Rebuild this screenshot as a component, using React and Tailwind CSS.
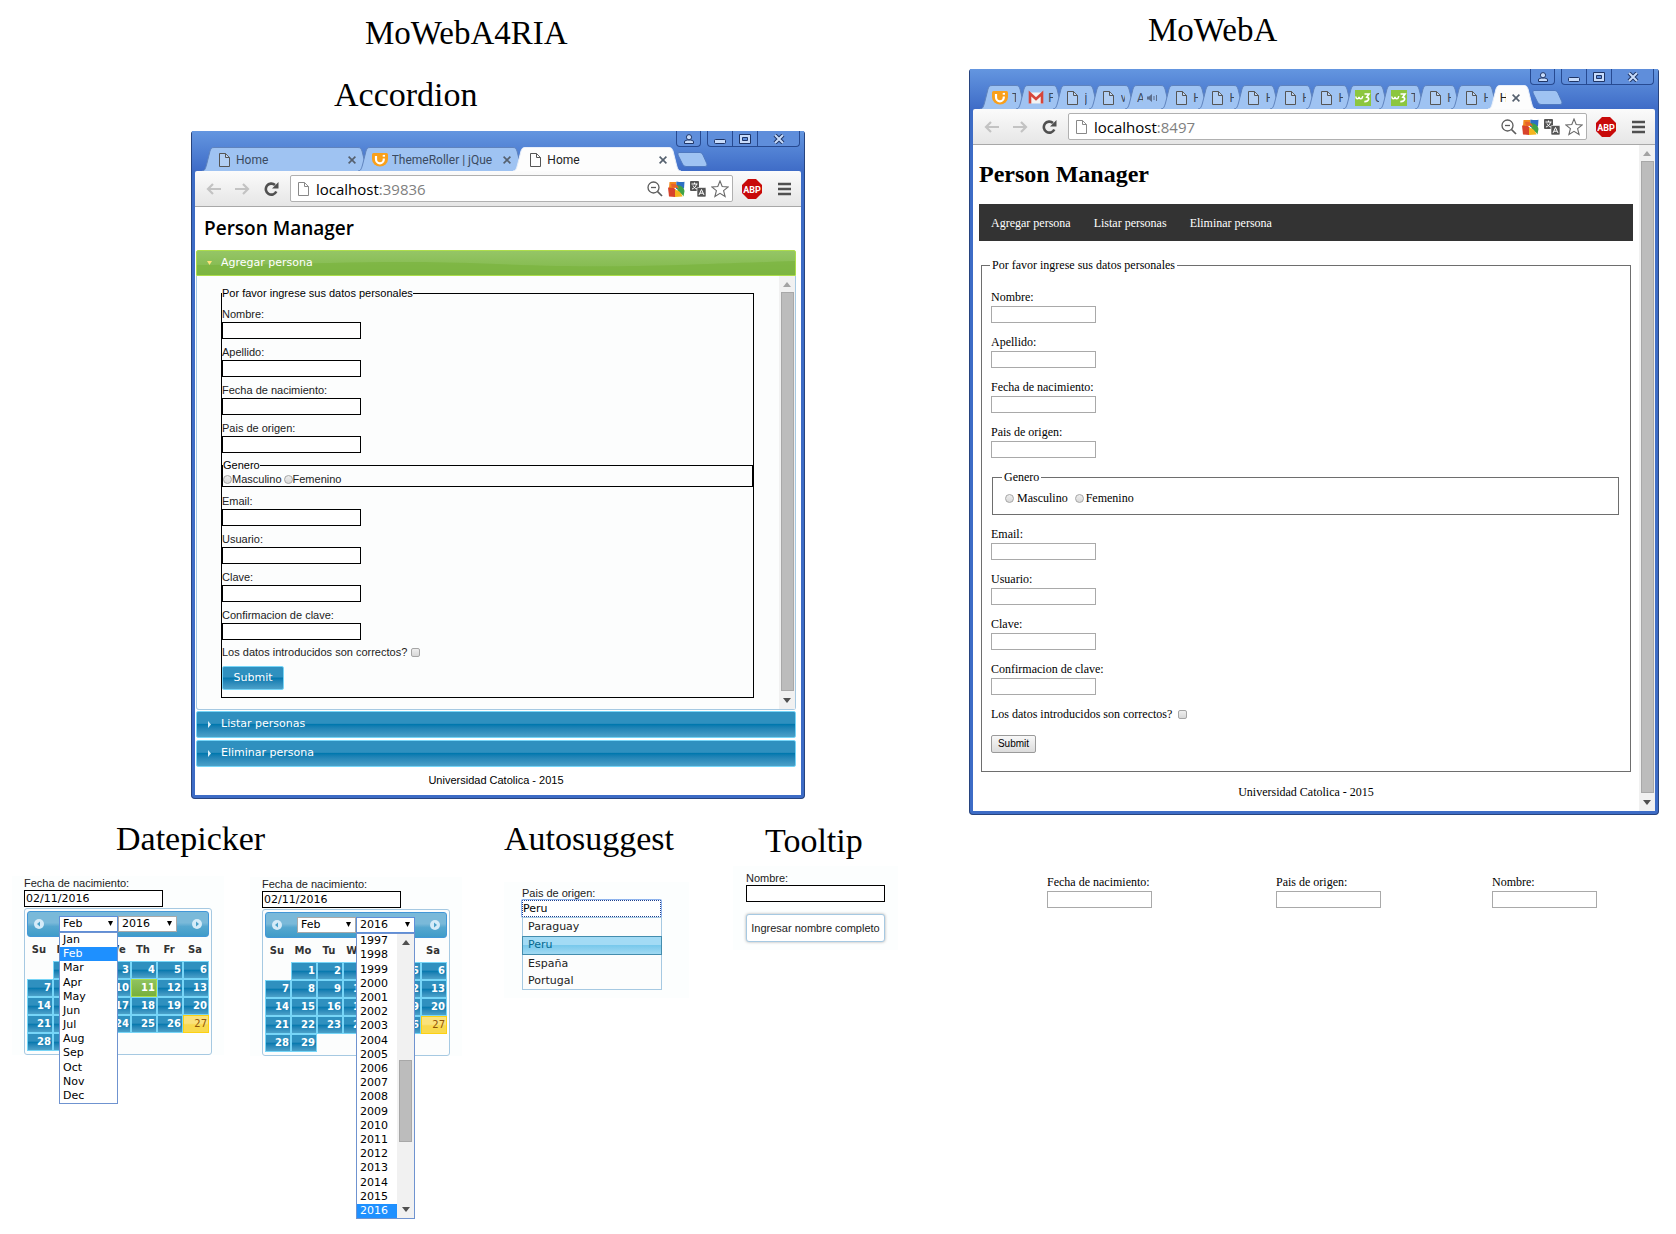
import React from "react";

const SANS = "font-['Liberation_Sans',Arial,sans-serif]";
const SERIF = "font-['Liberation_Serif','Times_New_Roman',serif]";

/* ---------- icons ---------- */

function PageIcon({ color = "#555" }) {
  return (
    <svg className="h-[14px] w-[11px] shrink-0" viewBox="0 0 11 14" fill="#fff" fillOpacity=".2" stroke={color}>
      <path d="M.5 .5h6l4 4v9H.5z" />
      <path d="M6.5 .5v4h4" />
    </svg>
  );
}

function UiIcon() {
  return (
    <svg className="h-4 w-4 shrink-0" viewBox="0 0 16 16">
      <path d="M1.500 1h13q1.500 0 1.500 1.500V7a8 7.500 0 0 1-16 0V2.500Q0 1 1.500 1z" fill="#f9a01b" />
      <path d="M4 4v3.200a3.800 4 0 0 0 7.800 0V6.500" fill="none" stroke="#fff" strokeWidth="2.200" />
      <path d="M10.700 3.800h2.300" stroke="#fff" strokeWidth="1.800" />
    </svg>
  );
}

function MailIcon() {
  return (
    <svg className="h-4 w-4 shrink-0" viewBox="0 0 16 16">
      <path d="M1 2.5h14v11H1z" fill="#f3f3f3" />
      <path d="M2 13.5V3.5l6 5.5 6-5.5v10" fill="none" stroke="#d6453a" strokeWidth="2.6" />
    </svg>
  );
}

function W3Icon() {
  return (
    <svg className="h-4 w-4 shrink-0" viewBox="0 0 16 16">
      <path d="M0 0h16v16H0z" fill="#8cc63f" />
      <path d="M.8 6.5c.3 3 2.8 3 3.2.3.4 2.700 3.200 2.700 3.800-.6" fill="none" stroke="#fff" strokeWidth="1.5" />
      <path d="M9.500 4h4.500l-2.200 3.200c3 .3 2.600 4.600-2.500 4.400" fill="none" stroke="#fff" strokeWidth="1.6" />
    </svg>
  );
}

function SpeakerIcon() {
  return (
    <svg className="h-[10px] w-[11px] shrink-0" viewBox="0 0 11 10">
      <path d="M0 3.500h2L5 1v8L2 6.500H0z" fill="#5d6f8d" />
      <path d="M7 3v4M9.500 2v6" stroke="#5d6f8d" fill="none" />
    </svg>
  );
}

function TabClose() {
  return (
    <svg className="h-2 w-2" viewBox="0 0 8 8" stroke="#55606e" strokeWidth="1.6">
      <path d="M.6 .6l6.800 6.800M7.400 .6L.6 7.400" />
    </svg>
  );
}

const FAVICONS = { page: PageIcon, ui: UiIcon, mail: MailIcon, w3: W3Icon };

/* ---------- browser chrome ---------- */

function Tab({ title, icon, active, closable, speaker, small }) {
  const fill = active ? "#fdfdfd" : "#9fc3f2";
  const line = active ? "#e8effa" : "#5f83bd";
  const Icon = icon ? FAVICONS[icon] : null;
  return (
    <div
      role="tab"
      aria-selected={!!active}
      className={
        "-mr-3 flex h-6 min-w-0 flex-1 " + (active ? "relative z-10" : "")
      }
    >
      <svg className="h-6 w-3 shrink-0" viewBox="0 0 12 24">
        <path d="M0 24C3 24 3.500 21 4.500 18L8 4C9 1.500 9.500 .5 12 .5V24z" fill={fill} />
        <path d="M0 24C3 24 3.500 21 4.500 18L8 4C9 1.500 9.500 .5 12 .5" fill="none" stroke={line} />
      </svg>
      <div
        className={
          "flex h-6 min-w-0 flex-1 items-center gap-1 overflow-hidden border-t text-[12px] font-['Roboto','Noto_Sans',sans-serif] " +
          (active ? "border-[#e8effa] bg-[#fdfdfd] text-[#222]" : "border-[#5f83bd] bg-[#9fc3f2] text-[#3a4a60]") +
          (small ? "" : " px-[2px]")
        }
      >
        {Icon && (
          <span className="flex w-4 shrink-0 justify-center">
            <Icon />
          </span>
        )}
        <span className={small && !Icon ? "w-[6px] shrink-0 overflow-hidden" : "min-w-0 flex-1 overflow-hidden whitespace-nowrap"}>
          {title}
        </span>
        {speaker && <SpeakerIcon />}
        {closable && (
          <button aria-label="Close tab" className="ml-[2px] shrink-0">
            <TabClose />
          </button>
        )}
      </div>
      <svg className="h-6 w-3 shrink-0" viewBox="0 0 12 24">
        <path d="M12 24C9 24 8.500 21 7.500 18L4 4C3 1.500 2.500 .5 0 .5V24z" fill={fill} />
        <path d="M12 24C9 24 8.500 21 7.500 18L4 4C3 1.500 2.500 .5 0 .5" fill="none" stroke={line} />
      </svg>
    </div>
  );
}

function WindowButtons() {
  return (
    <div className="flex h-4 justify-end gap-[6px] pr-px">
      <button aria-label="User" className="flex h-4 w-[25px] items-center justify-center rounded-b border border-t-0 border-[#274a91] bg-[#5f8edb]">
        <svg className="h-[10px] w-[10px]" viewBox="0 0 10 10" fill="#c8dcfb" stroke="#1f3566">
          <path d="M.5 9.500V7.200L3 6h4l2.500 1.200v2.300z" />
          <circle cx="5" cy="3.200" r="2.600" />
        </svg>
      </button>
      <div className="flex h-4 rounded-b border border-t-0 border-[#274a91] bg-[#5f8edb]">
        <button aria-label="Minimize" className="flex w-[25px] items-center justify-center border-r border-[#274a91]">
          <svg className="h-[10px] w-[12px]" viewBox="0 0 12 10" fill="#c8dcfb" stroke="#1f3566">
            <rect x=".5" y="5.500" width="11" height="4" rx="1" />
          </svg>
        </button>
        <button aria-label="Maximize" className="flex w-[25px] items-center justify-center border-r border-[#274a91]">
          <svg className="h-[10px] w-[12px]" viewBox="0 0 12 10" fill="none">
            <path d="M.5 .5h11v9H.5z" fill="#c8dcfb" stroke="#1f3566" />
            <path d="M3.500 3.500h5v3h-5z" fill="#5f8edb" stroke="#1f3566" />
          </svg>
        </button>
        <button aria-label="Close" className="flex w-[41px] items-center justify-center">
          <svg className="h-[10px] w-[12px]" viewBox="0 0 12 10">
            <path d="M2 1l8 8M10 1L2 9" stroke="#1f3566" strokeWidth="4" />
            <path d="M2 1l8 8M10 1L2 9" stroke="#c8dcfb" strokeWidth="2" />
          </svg>
        </button>
      </div>
    </div>
  );
}

function Toolbar({ port }) {
  return (
    <div className="flex h-9 items-center rounded-t-[2px] border-b border-[#a8a8a8] bg-linear-to-b from-[#fbfbfb] to-[#e6e6e6] pl-[11px] pr-[10px]">
      <button aria-label="Back" className="mr-[14px]">
        <svg className="h-3 w-[15px]" viewBox="0 0 15 12" fill="none" stroke="#c3c3c3" strokeWidth="2.200">
          <path d="M15 6H2M7 1L2 6l5 5" />
        </svg>
      </button>
      <button aria-label="Forward" className="mr-[14px]">
        <svg className="h-3 w-[15px]" viewBox="0 0 15 12" fill="none" stroke="#c3c3c3" strokeWidth="2.200">
          <path d="M0 6h13M8 1l5 5-5 5" />
        </svg>
      </button>
      <button aria-label="Reload" className="mr-[11px]">
        <svg className="h-[14px] w-[15px]" viewBox="0 0 15 14">
          <path d="M12.300 9.500A5.500 5.500 0 1 1 11 3" fill="none" stroke="#505050" strokeWidth="2.600" />
          <path d="M14.500 0v6.500H8z" fill="#505050" />
        </svg>
      </button>
      <div className="flex h-[27px] min-w-0 flex-1 items-center rounded-[2px] border border-[#b0b0b0] bg-white pl-[7px] pr-[3px]">
        <PageIcon color="#888" />
        <div className="ml-[7px] flex-1 font-['Open_Sans','Noto_Sans',sans-serif] text-[15px] leading-5 text-black">
          localhost<span className="text-[#808080]">:{port}</span>
        </div>
        <div className="flex items-center gap-[5px]">
          <svg className="h-4 w-4" viewBox="0 0 16 16" fill="none" stroke="#5c5c5c">
            <circle cx="6.500" cy="6.500" r="5.500" strokeWidth="1.300" />
            <path d="M4 6.500h5" strokeWidth="1.300" />
            <path d="M10.500 10.500l4.500 4.500" strokeWidth="1.700" />
          </svg>
          <svg className="h-4 w-[17px]" viewBox="0 0 17 16">
            <path d="M1.500 1h7l-.5 6H1z" fill="#f08a1e" />
            <path d="M8.500 .5c3 .5 5.500 .8 8 .2L16 7.500 8 8z" fill="#2d6fc4" />
            <path d="M0 6.500l6 .5 2 2-1 7-6-.5z" fill="#d8432b" />
            <path d="M8 4c4 0 8 2 8.500 6l-1 5.500c-1-2-2-3-5-3z" fill="#3fa346" />
            <path d="M7 9c3 0 6 2 7.500 6.500L7 16z" fill="#f4b61e" />
            <path d="M3 3c4-1 7 1 8 5-2-2-5-2-7-1z" fill="#e8622a" />
          </svg>
          <svg className="h-4 w-4" viewBox="0 0 16 16">
            <rect width="9" height="10" rx="1" fill="#555" />
            <path d="M1.500 3h6M4.500 1.500V3M6.500 3C6 5.500 4 7.500 2 8M3 4.500c.5 1.500 2 3 4 3.500" fill="none" stroke="#fff" />
            <rect x="7" y="6.500" width="9" height="9.500" rx="1" fill="#555" stroke="#fff" strokeWidth=".6" />
            <path d="M9 14l2.500-5.500L14 14M10 12.200h3" fill="none" stroke="#fff" />
          </svg>
          <svg className="h-[18px] w-[18px]" viewBox="0 0 18 18" fill="#fff" stroke="#6a6a6a" strokeWidth="1.100">
            <path d="M9 1l2.200 5.500 6 .4-4.600 3.800L14.100 16.500 9 13.300 3.900 16.500l1.500-5.800L.8 6.900l6-.4z" />
          </svg>
        </div>
      </div>
      <button aria-label="Adblock Plus" className="ml-[9px]">
        <svg className="h-5 w-5" viewBox="0 0 20 20">
          <path d="M6 0h8l6 6v8l-6 6H6l-6-6V6z" fill="#c80a0a" />
          <text x="10" y="13.500" textAnchor="middle" fill="#fff" fontSize="9" fontWeight="700" fontFamily="Roboto, sans-serif">
            ABP
          </text>
        </svg>
      </button>
      <button aria-label="Menu" className="ml-4">
        <svg className="h-[14px] w-[13px]" viewBox="0 0 13 14" stroke="#505050" strokeWidth="2.600">
          <path d="M0 2h13M0 7h13M0 12h13" />
        </svg>
      </button>
    </div>
  );
}

function Browser({ tabs, port, small, children }) {
  return (
    <div className="rounded-t-[3px] rounded-b border border-t-0 border-[#27447f] bg-[#3d6cc6] px-[3px] pb-[3px]">
      <div className="-mx-[3px] bg-linear-to-b from-[#6496e0] to-[#3f6cc7] px-[3px]">
        <WindowButtons />
        <div className="flex h-6 items-center">
          <div role="tablist" className="flex h-6 min-w-0 flex-1 pl-[7px] pr-3">
            {tabs.map((t, i) => (
              <Tab key={i} {...t} small={small} />
            ))}
          </div>
          <button aria-label="New tab" className={small ? "mr-[92px] -ml-1" : "mr-[93px] -ml-1"}>
            <svg className="block h-[15px] w-[31px]" viewBox="0 0 31 15">
              <path d="M2 .5h21q2 0 3 2.500l4 9q.5 2.500-2 2.500H9q-2.500 0-3.500-2.500L1 3Q.3 .8 2 .5z" fill="#9fc3f2" stroke="#4f79c0" />
            </svg>
          </button>
        </div>
      </div>
      <Toolbar port={port} />
      <div className="bg-white">{children}</div>
    </div>
  );
}

function ScrollBar() {
  return (
    <div aria-hidden="true" className="flex w-4 shrink-0 flex-col items-center bg-[#f1f1f1]">
      <svg className="h-4 w-2 shrink-0" viewBox="0 0 8 16">
        <path d="M0 11l4-5 4 5z" fill="#a3a3a3" />
      </svg>
      <div className="w-[13px] flex-1 border border-[#a8a8a8] bg-[#bcbcbc]" />
      <svg className="h-[18px] w-2 shrink-0" viewBox="0 0 8 18">
        <path d="M0 7l4 5 4-5z" fill="#505050" />
      </svg>
    </div>
  );
}

/* ---------- form fields ---------- */

const RADIO = "h-[9px] w-[9px] appearance-none rounded-full border border-[#a5a5a5] bg-linear-to-b from-[#eee] to-[#d8d8d8]";
const CHECK = "h-[9px] w-[9px] appearance-none rounded-[2px] border border-[#a5a5a5] bg-linear-to-b from-[#eee] to-[#d8d8d8]";

function DarkField({ id, label, type = "text" }) {
  return (
    <div>
      <label htmlFor={id} className="block h-[21px] pt-[5px] leading-4">
        {label}
      </label>
      <input id={id} type={type} className="block h-[17px] w-[139px] border border-black bg-white" />
    </div>
  );
}

function PlainField({ id, label, type = "text" }) {
  return (
    <div className={"mb-3 text-[12px] text-black " + SERIF}>
      <label htmlFor={id} className="block leading-[14px]">
        {label}
      </label>
      <input id={id} type={type} className="mt-[2px] block h-[17px] w-[105px] border border-[#a9a9a9] bg-white" />
    </div>
  );
}

const BEFORE = [
  ["nombre", "Nombre:"],
  ["apellido", "Apellido:"],
  ["fecha", "Fecha de nacimiento:"],
  ["pais", "Pais de origen:"],
];
const AFTER = [
  ["email", "Email:"],
  ["usuario", "Usuario:"],
  ["clave", "Clave:", "password"],
  ["confirmacion", "Confirmacion de clave:", "password"],
];

/* ---------- page 1: accordion ---------- */

const BLUE = "bg-linear-to-b from-[#2f90bf] from-45% via-[#0078ae] via-50% to-[#4ba1c9]";

function ClosedHeader({ title }) {
  return (
    <button
      aria-expanded="false"
      className={"flex h-[27px] w-full items-center rounded-[2px] border border-[#77d5f7] pl-[11px] text-left text-[11px] text-white " + BLUE}
    >
      <svg className="mr-[10px] h-[7px] w-[3px]" viewBox="0 0 3 7">
        <path d="M0 0l3 3.500L0 7z" fill="#d8f0fb" />
      </svg>
      {title}
    </button>
  );
}

function AccordionPage() {
  return (
    <div className="pl-px pr-[5px] font-['DejaVu_Sans',Verdana,sans-serif]">
      <h1 className="h-[43px] pl-2 pt-[7px] font-['Open_Sans','Trebuchet_MS',sans-serif] text-[19px] font-semibold leading-7 text-black">Person Manager</h1>
      <button
        aria-expanded="true"
        className="relative flex h-[26px] w-full items-center overflow-hidden rounded-t-[2px] border border-[#acdd4a] bg-linear-to-b from-[#95c566] to-[#7fb846] pl-[10px] text-left text-[11px] text-white"
      >
        <svg className="absolute inset-0 h-full w-full" viewBox="0 0 600 24" preserveAspectRatio="none">
          <path d="M0 14C120 14 180 8 300 13S480 14 600 10V24H0z" fill="#7bb33f" fillOpacity=".7" />
        </svg>
        <svg className="relative mr-[9px] h-1 w-[5px]" viewBox="0 0 5 4">
          <path d="M0 0h5L2.500 4z" fill="#ffe27a" />
        </svg>
        <span className="relative">Agregar persona</span>
      </button>
      <div className="flex rounded-b-[3px] border border-t-0 border-[#a6c9e2] bg-[#fcfdfd]">
        <form className={"flex-1 pr-[25px] pl-6 pt-[10px] pb-[11px] text-[11px] text-[#222] " + SANS}>
          <fieldset className="border border-black pb-[7px]">
            <legend className="leading-[14px] text-black">Por favor ingrese sus datos personales</legend>
            <div className="pt-px">
              {BEFORE.map(([id, label]) => (
                <DarkField key={id} id={"a-" + id} label={label} />
              ))}
              <fieldset className="mt-[5px] mb-px border border-black">
                <legend className="leading-[14px] text-black">Genero</legend>
                <div className="flex h-[14px] items-center gap-[2px] leading-[14px]">
                  <label className="flex items-center">
                    <input type="radio" name="a-genero" className={RADIO} />
                    Masculino
                  </label>
                  <label className="flex items-center">
                    <input type="radio" name="a-genero" className={RADIO} />
                    Femenino
                  </label>
                </div>
              </fieldset>
              {AFTER.map(([id, label, type]) => (
                <DarkField key={id} id={"a-" + id} label={label} type={type} />
              ))}
              <label className="flex h-6 items-center gap-[4px]">
                Los datos introducidos son correctos?
                <input type="checkbox" className={CHECK} />
              </label>
              <button
                type="button"
                className={"mt-[2px] block h-6 w-[62px] rounded-[2px] border border-[#77d5f7] text-[11px] text-white font-['DejaVu_Sans',Verdana,sans-serif] " + BLUE}
              >
                Submit
              </button>
            </div>
          </fieldset>
        </form>
        <ScrollBar />
      </div>
      <div className="mt-px flex flex-col gap-[2px]">
        <ClosedHeader title="Listar personas" />
        <ClosedHeader title="Eliminar persona" />
      </div>
      <footer className={"h-7 text-center text-[11px] leading-[26px] text-black " + SANS}>Universidad Catolica - 2015</footer>
    </div>
  );
}

/* ---------- page 2: plain form ---------- */

function PlainPage() {
  return (
    <div className={"flex text-[12px] leading-[14px] text-black " + SERIF}>
      <div className="min-w-0 flex-1 px-[6px] pt-[15px] pb-3">
        <h1 className="text-[24px] font-bold leading-7">Person Manager</h1>
        <nav className="mt-4 flex h-[37px] items-center gap-[23px] bg-[#333] px-3 text-white">
          <a href="#agregar">Agregar persona</a>
          <a href="#listar">Listar personas</a>
          <a href="#eliminar">Eliminar persona</a>
        </nav>
        <form>
          <fieldset className="mx-[2px] mt-[17px] border border-[#6e6e6e] pt-[18px] pr-[11px] pb-[18px] pl-2">
            <legend className="px-[2px]">Por favor ingrese sus datos personales</legend>
            <div className="pl-px">
              {BEFORE.map(([id, label]) => (
                <PlainField key={id} id={"b-" + id} label={label} />
              ))}
              <fieldset className="mb-3 ml-px border border-[#6e6e6e] px-[9px] pt-[7px] pb-[9px]">
                <legend className="px-[2px]">Genero</legend>
                <div className="flex items-center gap-[7px] pl-[3px]">
                  <label className="flex items-center gap-[3px]">
                    <input type="radio" name="b-genero" className={RADIO} />
                    Masculino
                  </label>
                  <label className="flex items-center gap-[2px]">
                    <input type="radio" name="b-genero" className={RADIO} />
                    Femenino
                  </label>
                </div>
              </fieldset>
              {AFTER.map(([id, label, type]) => (
                <PlainField key={id} id={"b-" + id} label={label} type={type} />
              ))}
              <label className="flex items-center gap-[6px]">
                Los datos introducidos son correctos?
                <input type="checkbox" className={CHECK} />
              </label>
              <button
                type="button"
                className={"mt-[14px] block h-[18px] w-[45px] rounded-[2px] border border-[#9a9a9a] bg-linear-to-b from-[#f8f8f8] to-[#dcdcdc] text-[10px] leading-4 " + SANS}
              >
                Submit
              </button>
            </div>
          </fieldset>
        </form>
        <footer className="mt-[13px] text-center">Universidad Catolica - 2015</footer>
      </div>
      <ScrollBar />
    </div>
  );
}

/* ---------- date picker ---------- */

const MONTHS = ["Jan", "Feb", "Mar", "Apr", "May", "Jun", "Jul", "Aug", "Sep", "Oct", "Nov", "Dec"];
const YEARS = Array.from({ length: 20 }, (_, i) => String(1997 + i));
const WEEKS = [0, 1, 2, 3, 4].map((w) => [0, 1, 2, 3, 4, 5, 6].map((d) => w * 7 + d));

function PickerSelect({ label, value, options, open, scroll }) {
  return (
    <div className="relative h-4 w-[59px]">
      <select
        aria-label={label}
        defaultValue={value}
        className={"block h-4 w-full appearance-none border bg-white pl-[3px] text-[11px] leading-[14px] text-black " + (open ? "border-[#5f8fd8]" : "border-[#a9a9a9]")}
      >
        {options.map((o) => (
          <option key={o}>{o}</option>
        ))}
      </select>
      <svg className="pointer-events-none absolute top-[5px] right-[5px] h-[5px] w-[5px]" viewBox="0 0 5 5">
        <path d="M0 0h5L2.500 5z" fill="#000" />
      </svg>
      {open && (
        <div className={"absolute top-4 left-0 z-20 flex w-full border border-[#6f93d0] bg-white text-[11px] text-black " + (scroll ? "h-[286px]" : "h-[172px]")}>
          <ul role="listbox" aria-label={label} className="flex flex-1 flex-col">
            {options.map((o) => (
              <li
                key={o}
                role="option"
                aria-selected={o === value}
                className={"flex flex-1 items-center pl-[3px] leading-[14px] " + (o === value ? "bg-[#1e90ff] text-white" : "")}
              >
                {o}
              </li>
            ))}
          </ul>
          {scroll && (
            <div aria-hidden="true" className="flex w-[17px] flex-col items-center bg-[#f1f1f1] py-[6px]">
              <svg className="h-[5px] w-2" viewBox="0 0 8 5">
                <path d="M0 5l4-5 4 5z" fill="#505050" />
              </svg>
              <div className="mt-[115px] mb-auto h-[82px] w-[13px] border border-[#a8a8a8] bg-[#bcbcbc]" />
              <svg className="h-[5px] w-2" viewBox="0 0 8 5">
                <path d="M0 0l4 5 4-5z" fill="#505050" />
              </svg>
            </div>
          )}
        </div>
      )}
    </div>
  );
}

function NavCircle({ next }) {
  return (
    <button aria-label={next ? "Next" : "Prev"}>
      <svg className="block h-[10px] w-[10px]" viewBox="0 0 10 10">
        <circle cx="5" cy="5" r="5" fill="#d5ebf8" />
        <path d={next ? "M4 2.500L7 5 4 7.500z" : "M6 2.500L3 5l3 2.500z"} fill="#4ba1c9" />
      </svg>
    </button>
  );
}

function dayClass(day, selected) {
  if (day === 27) return "border-[#fcd113] bg-linear-to-b from-[#fae27c] from-45% to-[#f8d94e] to-55% text-[#915608] font-normal";
  if (day === selected) return "border-[#acdd4a] bg-linear-to-b from-[#8fc25f] to-[#78b03b] text-white";
  return "border-[#77d5f7] text-white " + BLUE;
}

function DatePicker({ id, open, selected }) {
  return (
    <div className="bg-[#fcfefe] px-3 font-['DejaVu_Sans',Verdana,sans-serif]">
      <label htmlFor={id} className={"block text-[11px] leading-[14px] text-[#222] " + SANS}>
        Fecha de nacimiento:
      </label>
      <input id={id} type="text" defaultValue="02/11/2016" className="block h-[17px] w-[139px] border border-black bg-white px-px text-[11px] text-black" />
      <div className="mt-px w-[188px] rounded-[3px] border border-[#a6c9e2] bg-[#fcfdfd] p-[2px] pb-[3px]">
        <div className="flex h-[26px] items-center justify-between rounded-[3px] border border-[#4297d7] bg-linear-to-b from-[#7ab9d9] from-45% via-[#55a7cf] via-60% to-[#3f9cc9] px-[6px]">
          <NavCircle />
          <div className="flex">
            <PickerSelect label="Month" value="Feb" options={MONTHS} open={open === "month"} />
            <PickerSelect label="Year" value="2016" options={YEARS} open={open === "year"} scroll />
          </div>
          <NavCircle next />
        </div>
        <table className="w-full table-fixed border-collapse text-[10px] font-bold">
          <thead>
            <tr className="h-6 text-[#333]">
              {["Su", "Mo", "Tu", "We", "Th", "Fr", "Sa"].map((d) => (
                <th key={d} className="p-0 pr-[2px] text-center">
                  {d}
                </th>
              ))}
            </tr>
          </thead>
          <tbody>
            {WEEKS.map((week, w) => (
              <tr key={w} className="h-[18px]">
                {week.map((day) => (
                  <td key={day} className="p-0">
                    {day > 0 && day < 30 && (
                      <button className={"block h-[18px] w-full border pr-px text-right leading-4 " + dayClass(day, selected)}>{day}</button>
                    )}
                  </td>
                ))}
              </tr>
            ))}
          </tbody>
        </table>
      </div>
    </div>
  );
}

/* ---------- autosuggest and tooltip ---------- */

function AutoSuggest() {
  return (
    <div className="w-[185px] bg-[#fcfefe] pt-[4px] pb-2 pl-[18px] font-['DejaVu_Sans',Verdana,sans-serif] text-[11px]">
      <label htmlFor="s-pais" className={"block leading-[14px] text-[#222] " + SANS}>
        Pais de origen:
      </label>
      <input
        id="s-pais"
        type="text"
        defaultValue="Peru"
        className="block h-[17px] w-[139px] rounded-[1px] border border-dotted border-[#1d3f8f] bg-white text-black ring-1 ring-[#8fb4ee]"
      />
      <ul role="listbox" aria-label="Pais de origen" className="w-[140px] border border-[#a6c9e2] bg-[#fcfdfd] text-[#222]">
        <li role="option" aria-selected="false" className="h-[18px] pl-[5px] leading-[18px]">Paraguay</li>
        <li role="option" aria-selected="true" className="-mx-px h-[19px] border border-[#448dae] bg-linear-to-b from-[#a3dbf5] from-45% via-[#79c9ec] via-50% to-[#a0d9f2] pl-[5px] leading-4 text-[#026890]">
          Peru
        </li>
        <li role="option" aria-selected="false" className="h-[17px] pl-[5px] leading-[18px]">España</li>
        <li role="option" aria-selected="false" className="h-[17px] pl-[5px] leading-[18px]">Portugal</li>
      </ul>
    </div>
  );
}

function TooltipDemo() {
  return (
    <div className={"bg-[#fcfefe] px-[13px] pt-[5px] pb-2 text-[11px] text-[#222] " + SANS}>
      <label htmlFor="t-nombre" className="block leading-[14px]">
        Nombre:
      </label>
      <input id="t-nombre" type="text" aria-describedby="t-tip" className="block h-[17px] w-[139px] border border-black bg-white" />
      <div id="t-tip" role="tooltip" className="mt-3 flex h-[28px] w-[139px] items-center justify-center whitespace-nowrap rounded-[3px] border border-[#a6c9e2] bg-white shadow-[0_0_3px_#aaa]">
        Ingresar nombre completo
      </div>
    </div>
  );
}

const HEADING = "text-[34px] leading-10 text-black font-['Liberation_Serif','Times_New_Roman',serif]";
const TOP_HEADING = "text-[33px] leading-10 text-black font-['Liberation_Serif','Times_New_Roman',serif]";

const HOME = { title: "H", icon: "page" };
const MANY_TABS = [
  { title: "T", icon: "ui" },
  { title: "F", icon: "mail" },
  { title: "j", icon: "page" },
  { title: "v", icon: "page" },
  { title: "A", speaker: true },
  HOME,
  HOME,
  HOME,
  HOME,
  HOME,
  { title: "C", icon: "w3" },
  { title: "T", icon: "w3" },
  HOME,
  HOME,
  { title: "H", active: true, closable: true },
];
const FEW_TABS = [
  { title: "Home", icon: "page", closable: true },
  { title: "ThemeRoller | jQue", icon: "ui", closable: true },
  { title: "Home", icon: "page", closable: true, active: true },
];

export default function App() {
  return (
    <main className="grid min-h-screen grid-cols-[minmax(0,937fr)_minmax(0,739fr)] bg-white">
      <div className="pt-[13px]">
        <section className="pl-[191px] pr-[132px]">
          <h2 className={"pl-[174px] " + TOP_HEADING}>MoWebA4RIA</h2>
          <h3 className={"mt-[22px] mb-4 pl-[143px] " + HEADING}>Accordion</h3>
          <Browser tabs={FEW_TABS} port="39836">
            <AccordionPage />
          </Browser>
        </section>
        <div className="mt-5 flex items-start pl-3">
          <section className="w-[450px]">
            <h3 className={"pl-[104px] " + HEADING}>Datepicker</h3>
            <div className="mt-[17px] flex items-start justify-between">
              <DatePicker id="d1" open="month" selected={11} />
              <div className="pt-px">
                <DatePicker id="d2" open="year" />
              </div>
            </div>
          </section>
          <section className="ml-[42px]">
            <h3 className={HEADING}>Autosuggest</h3>
            <div className="mt-[23px]">
              <AutoSuggest />
            </div>
          </section>
          <section className="mt-[2px] ml-[44px]">
            <h3 className={"pl-8 " + HEADING}>Tooltip</h3>
            <div className="mt-[5px]">
              <TooltipDemo />
            </div>
          </section>
        </div>
      </div>
      <div className="pt-[10px] pr-[17px] pl-8">
        <h2 className={"mb-[19px] pl-[179px] " + TOP_HEADING}>MoWebA</h2>
        <Browser tabs={MANY_TABS} port="8497" small>
          <PlainPage />
        </Browser>
        <div className="mt-[60px] flex items-start pr-[62px] pl-[78px]">
          <PlainField id="c-fecha" label="Fecha de nacimiento:" />
          <div className="mr-auto ml-[124px]">
            <PlainField id="c-pais" label="Pais de origen:" />
          </div>
          <PlainField id="c-nombre" label="Nombre:" />
        </div>
      </div>
    </main>
  );
}
